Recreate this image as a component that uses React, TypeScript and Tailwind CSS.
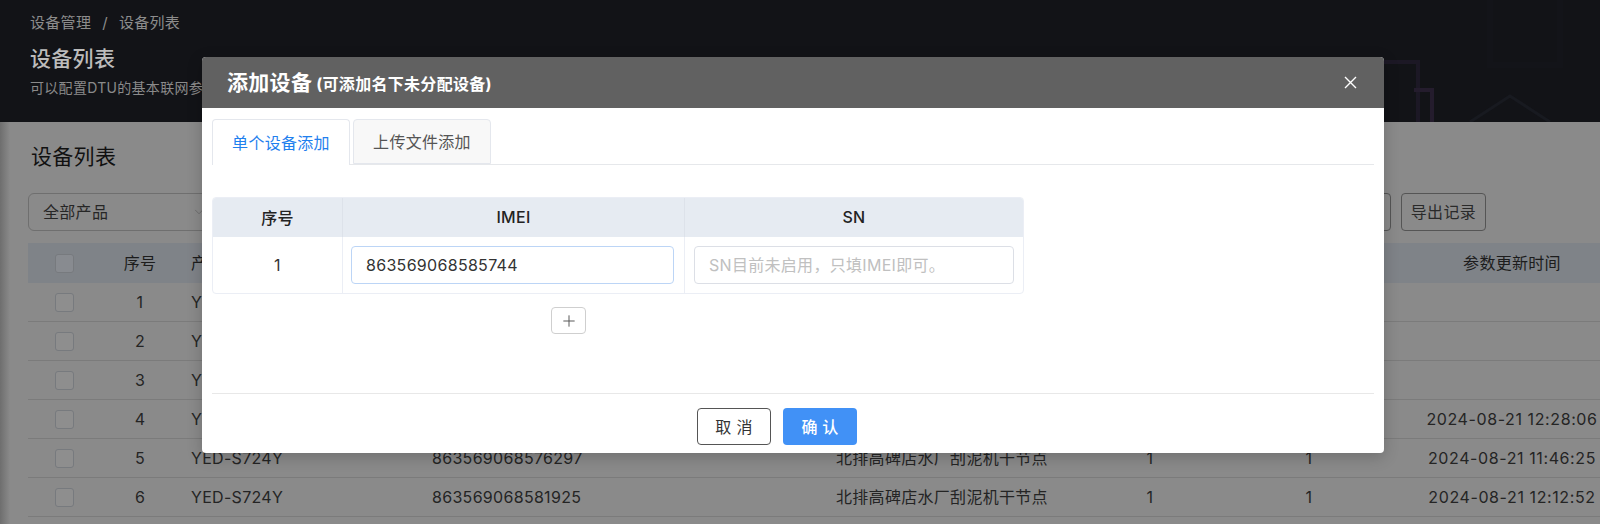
import { Plus, ChevronDown } from 'lucide-react';

interface DeviceRow {
  no: number;
  model: string;
  imei: string;
  name: string;
  channels: string;
  status: string;
  updatedAt: string;
}

const rows: DeviceRow[] = [
  { no: 1, model: 'YED-S724Y', imei: '863569068585702', name: '北排高碑店水厂刮泥机干节点', channels: '1', status: '1', updatedAt: '' },
  { no: 2, model: 'YED-S724Y', imei: '863569068585710', name: '北排高碑店水厂刮泥机干节点', channels: '1', status: '1', updatedAt: '' },
  { no: 3, model: 'YED-S724Y', imei: '863569068585728', name: '北排高碑店水厂刮泥机干节点', channels: '1', status: '1', updatedAt: '' },
  { no: 4, model: 'YED-S724Y', imei: '863569068585736', name: '北排高碑店水厂刮泥机干节点', channels: '1', status: '1', updatedAt: '2024-08-21 12:28:06' },
  { no: 5, model: 'YED-S724Y', imei: '863569068576297', name: '北排高碑店水厂刮泥机干节点', channels: '1', status: '1', updatedAt: '2024-08-21 11:46:25' },
  { no: 6, model: 'YED-S724Y', imei: '863569068581925', name: '北排高碑店水厂刮泥机干节点', channels: '1', status: '1', updatedAt: '2024-08-21 12:12:52' },
];

const gridCols = 'grid grid-cols-[73px_78px_240px_400px_268px_126px_192px_214px]';

function Checkbox({ header }: { header?: boolean }) {
  return (
    <span
      className={`block h-[19px] w-[19px] rounded-[3px] border border-[#777a7e] ${
        header ? 'bg-[#888b90]' : 'bg-[#8e8e8e]'
      }`}
    />
  );
}

function DeviceTable() {
  return (
    <div className="mt-[12px] w-[1591px] text-[16px] text-[#242424]">
      <div className={`${gridCols} h-[40px] items-center bg-[#7f8388] text-[#1c1c1c]`}>
        <div className="flex justify-center">
          <Checkbox header />
        </div>
        <div className="text-center">序号</div>
        <div className="pl-[12px]">产品型号</div>
        <div className="pl-[13px]">IMEI</div>
        <div className="pl-[17px]">设备名称</div>
        <div className="text-center">通道</div>
        <div className="text-center">状态</div>
        <div className="text-center">参数更新时间</div>
      </div>
      {rows.map((row) => (
        <div
          key={row.no}
          className={`${gridCols} h-[39px] items-center border-b border-[#7b7b7b]`}
        >
          <div className="flex justify-center">
            <Checkbox />
          </div>
          <div className="text-center">{row.no}</div>
          <div className="pl-[12px]">{row.model}</div>
          <div className="pl-[13px]">{row.imei}</div>
          <div className="pl-[17px]">{row.name}</div>
          <div className="text-center">{row.channels}</div>
          <div className="text-center">{row.status}</div>
          <div className="text-center tracking-[0.6px]">{row.updatedAt}</div>
        </div>
      ))}
    </div>
  );
}

function AddDeviceModal() {
  return (
    <div className="absolute left-[202px] top-[57px] w-[1182px] rounded-[4px] bg-white shadow-[0_4px_16px_rgba(0,0,0,0.2)]">
      <header className="flex h-[51px] items-center justify-between rounded-t-[4px] bg-[#616161] pl-[25px] pr-[27px] text-white">
        <h2 className="flex items-baseline font-bold">
          <span className="text-[21px]">添加设备</span>
          <span className="ml-[4px] text-[16px]">(可添加名下未分配设备)</span>
        </h2>
        <svg className="h-[13px] w-[13px]" viewBox="0 0 13 13" fill="none" stroke="white" strokeWidth="1.4">
          <path d="M1 1 L12 12 M12 1 L1 12" />
        </svg>
      </header>

      <div className="px-[10px]">
        <div className="mt-[11px] flex gap-[3px] border-b border-[#e6e8eb]">
          <button className="-mb-px h-[46px] w-[138px] rounded-t-[4px] border border-b-0 border-[#e4e7ed] bg-white text-[16px] text-[#1f80ee]">
            单个设备添加
          </button>
          <button className="h-[45px] w-[138px] rounded-t-[4px] border border-[#e4e7ed] bg-[#f8f8f8] text-[16px] text-[#555]">
            上传文件添加
          </button>
        </div>

        <div className="mt-[32px] w-[812px] overflow-hidden rounded-[4px] border border-[#ebeef5] text-[16px] text-[#222]">
          <div className="grid h-[39px] grid-cols-[129px_342px_1fr] items-center bg-[#e6ebf2]">
            <div className="text-center font-medium">序号</div>
            <div className="h-full border-l border-[#dde2ea] text-center leading-[39px] font-medium">IMEI</div>
            <div className="h-full border-l border-[#dde2ea] text-center leading-[39px] font-medium">SN</div>
          </div>
          <div className="grid h-[56px] grid-cols-[129px_342px_1fr] items-center">
            <div className="text-center text-[#333]">1</div>
            <div className="flex h-full items-center border-l border-[#ebeef5] pl-[8px] pr-[10px]">
              <input
                readOnly
                value="863569068585744"
                className="h-[38px] w-full rounded-[4px] border-[1.5px] border-[#bcd5f6] pl-[14px] text-[16px] tracking-[0.3px] text-[#333] outline-none"
              />
            </div>
            <div className="flex h-full items-center border-l border-[#ebeef5] px-[9px]">
              <input
                readOnly
                placeholder="SN目前未启用，只填IMEI即可。"
                className="h-[38px] w-full rounded-[4px] border border-[#dcdfe6] pl-[14px] text-[16px] outline-none placeholder:text-[#c0c0c0]"
              />
            </div>
          </div>
        </div>

        <button className="ml-[339px] mt-[13px] flex h-[27px] w-[35px] items-center justify-center rounded-[4px] border border-[#cfcfcf] bg-white text-[#555]">
          <Plus className="h-[18px] w-[18px]" strokeWidth={1.3} />
        </button>

        <div className="mt-[59px] flex justify-center gap-[12px] border-t border-[#e8e8e8] pb-[8px] pr-[32px] pt-[14px]">
          <button className="h-[37px] w-[74px] rounded-[4px] border border-[#555] bg-white text-[16px] text-[#333]">
            取 消
          </button>
          <button className="h-[37px] w-[74px] rounded-[4px] bg-[#4191f6] text-[16px] font-medium text-white">
            确 认
          </button>
        </div>
      </div>
    </div>
  );
}

export default function App() {
  return (
    <div className="relative h-[524px] w-[1600px] overflow-hidden bg-[#8a8a8a] font-['Inter','Noto_Sans_CJK_SC',sans-serif] tracking-[0.3px]">
      <section className="relative h-[122px] bg-[#121317] pl-[30px]">
        {/* faint decoration behind the header, mostly hidden by the dialog */}
        <svg className="absolute right-0 top-0 h-[122px] w-[230px]" viewBox="0 0 230 122" fill="none">
          <rect x="120" y="-10" width="70" height="75" stroke="#131419" strokeWidth="6" />
          <path d="M14 62 L48 62 L48 122" stroke="#1c1825" strokeWidth="4" />
          <path d="M44 90 L62 90 L62 122" stroke="#241c2d" strokeWidth="4" />
          <path d="M100 122 L140 96 L180 122" stroke="#181a20" strokeWidth="3" />
        </svg>
        <nav className="pt-[13px] text-[15px] leading-[20px] text-[#8c8c8c]">
          设备管理<span className="mx-[11px]">/</span>设备列表
        </nav>
        <h1 className="mt-[12px] text-[21px] font-medium leading-[28px] text-[#bcbcbc]">设备列表</h1>
        <p className="mt-[5px] text-[14px] leading-[20px] text-[#8a8a8a]">
          可以配置DTU的基本联网参数，查看设备的在线状态与参数更新时间
        </p>
      </section>

      <div className="absolute left-0 top-[122px] h-[402px] w-[10px] bg-gradient-to-r from-[#6e6e6e] to-transparent" />

      <main className="pl-[28px]">
        <h2 className="pl-[3px] pt-[21px] text-[21px] leading-[28px] text-[#111]">设备列表</h2>
        <div className="mt-[22px] flex h-[38px] w-[1458px] items-center justify-between">
          <div className="flex h-full w-[192px] items-center justify-between rounded-[6px] border border-[#6f6f6f] pl-[14px] pr-[13px] text-[16px] text-[#262626]">
            全部产品
            <ChevronDown className="h-[14px] w-[14px] text-[#666]" strokeWidth={1.3} />
          </div>
          <div className="flex h-full gap-[10px]">
            <button className="h-full rounded-[4px] border border-[#555] px-[9px] text-[16px] text-[#2a2a2a]">添加设备</button>
            <button className="h-full rounded-[4px] border border-[#555] px-[9px] text-[16px] text-[#2a2a2a]">导出记录</button>
          </div>
        </div>
        <DeviceTable />
      </main>

      <AddDeviceModal />
    </div>
  );
}
